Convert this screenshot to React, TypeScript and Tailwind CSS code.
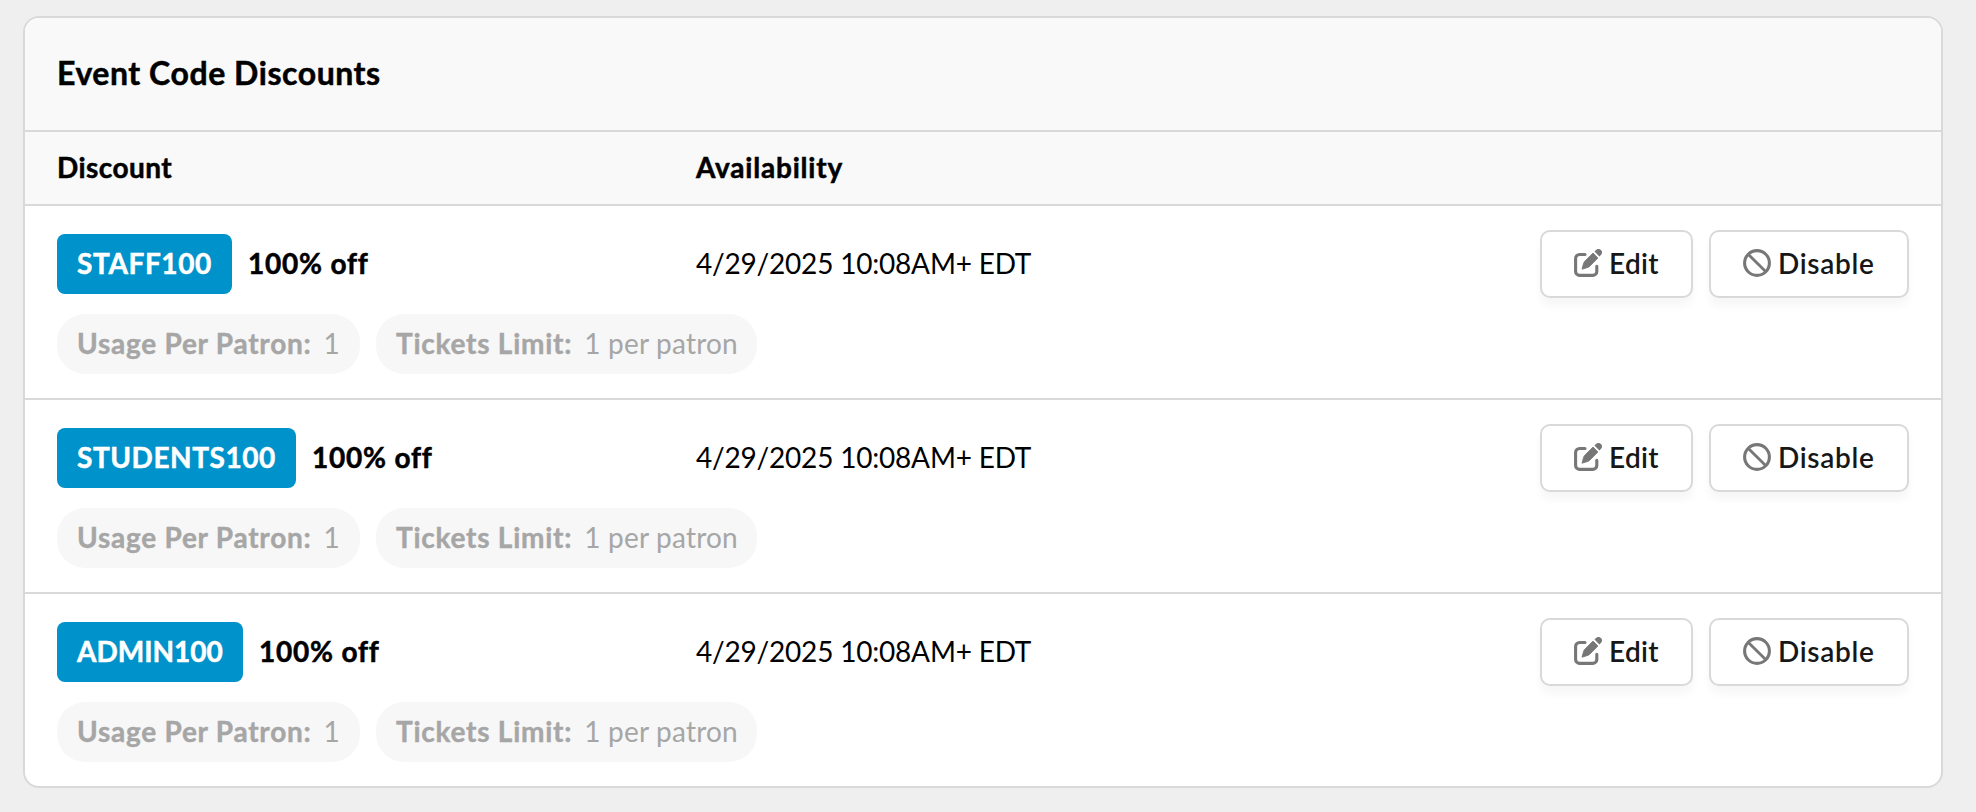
type Discount = {
  code: string;
  amount: string;
  availability: string;
  badgeClass: string;
};

const DISCOUNTS: Discount[] = [
  {
    code: "STAFF100",
    amount: "100% off",
    availability: "4/29/2025 10:08AM+ EDT",
    badgeClass: "w-[175px] tracking-[0.6px]",
  },
  {
    code: "STUDENTS100",
    amount: "100% off",
    availability: "4/29/2025 10:08AM+ EDT",
    badgeClass: "w-[239px] tracking-[0.55px]",
  },
  {
    code: "ADMIN100",
    amount: "100% off",
    availability: "4/29/2025 10:08AM+ EDT",
    badgeClass: "w-[186px]",
  },
];

function EditIcon() {
  return (
    <svg viewBox="0 0 28 28" className="size-7 shrink-0" fill="currentColor">
      <path
        d="M11 5.5H5.6a4 4 0 0 0-4 4v12.9a4 4 0 0 0 4 4h13.2a4 4 0 0 0 4-4V17.2"
        fill="none"
        stroke="currentColor"
        strokeWidth="3.1"
        strokeLinecap="round"
      />
      <path
        d="M8 20.2 9.6 14.4Q9.9 13.2 10.8 12.3L19 4.1 23.9 9 15.7 17.2Q14.8 18.1 13.7 18.4Z"
        stroke="currentColor"
        strokeWidth="0.9"
        strokeLinejoin="round"
      />
      <path d="M20.5 2.6 22 1.1a3.4 3.4 0 0 1 4.9 4.9L25.4 7.5Z" />
    </svg>
  );
}

function BanIcon() {
  return (
    <svg viewBox="0 0 28 28" className="size-7 shrink-0" fill="none" stroke="currentColor">
      <circle cx="14" cy="14" r="12.4" strokeWidth="3.1" />
      <path d="M5.4 5.4 22.6 22.6" strokeWidth="2.8" />
    </svg>
  );
}

function Pill({ label, value, className }: { label: string; value: string; className: string }) {
  return (
    <div
      className={`flex h-[60px] shrink-0 items-center rounded-[28px] bg-[#f7f7f7] pb-0.5 pl-5 text-[#a6a6a6] ${className}`}
    >
      <span className="font-bold tracking-[0.75px] [-webkit-text-stroke:0.4px]">{label}</span>
      <span className="ml-[12px] tracking-[0.2px]">{value}</span>
    </div>
  );
}

function ActionButton({
  icon,
  label,
  className,
}: {
  icon: React.ReactNode;
  label: string;
  className: string;
}) {
  return (
    <button
      className={`flex h-[68px] items-center rounded-[10px] border-2 border-[#d9d9d9] bg-white pb-0.5 pl-8 font-semibold text-[#171717] shadow-[0_8px_8px_rgba(0,0,0,0.035)] ${className}`}
    >
      <span className="mr-[7px] text-[#777]">{icon}</span>
      {label}
    </button>
  );
}

function DiscountRow({ discount }: { discount: Discount }) {
  return (
    <div className="flex h-[194px] border-t-2 border-[#d9d9d9] px-8">
      <div className="w-[639px] shrink-0 pt-7">
        <div className="flex items-center gap-4 font-bold [-webkit-text-stroke:0.5px]">
          <span
            className={`flex h-[60px] items-center rounded-lg bg-[#0092ca] pb-0.5 pl-5 text-white ${discount.badgeClass}`}
          >
            {discount.code}
          </span>
          <span className="pb-0.5 tracking-[0.8px]">{discount.amount}</span>
        </div>
        <div className="mt-5 flex gap-4 whitespace-nowrap">
          <Pill label="Usage Per Patron:" value="1" className="w-[303px]" />
          <Pill label="Tickets Limit:" value="1 per patron" className="w-[381px]" />
        </div>
      </div>
      <div className="mt-7 flex h-[60px] items-center pb-0.5 whitespace-nowrap tracking-[-0.2px]">
        {discount.availability}
      </div>
      <div className="ml-auto flex gap-4 pt-6">
        <ActionButton icon={<EditIcon />} label="Edit" className="w-[153px] tracking-[0.3px]" />
        <ActionButton icon={<BanIcon />} label="Disable" className="w-[200px] tracking-[0.7px]" />
      </div>
    </div>
  );
}

export default function App() {
  return (
    <div className="h-[812px] bg-[#efefef] pt-4 pl-[23px] font-['Lato','Open_Sans',sans-serif] text-[28px] leading-10 text-black">
      <div className="h-[772px] w-[1920px] overflow-hidden rounded-2xl border-2 border-[#d9d9d9] bg-white">
        <div className="flex h-28 items-center bg-[#f9f9f9] px-8 pb-0.5">
          <h2 className="text-[32px] font-bold tracking-[0.55px] [-webkit-text-stroke:0.5px]">
            Event Code Discounts
          </h2>
        </div>
        <div className="flex h-[74px] items-center border-t-2 border-[#d9d9d9] bg-[#f9f9f9] px-8 pb-0.5 font-bold [-webkit-text-stroke:0.5px]">
          <div className="w-[639px] tracking-[0.45px]">Discount</div>
          <div className="tracking-[0.8px]">Availability</div>
        </div>
        {DISCOUNTS.map((d) => (
          <DiscountRow key={d.code} discount={d} />
        ))}
      </div>
    </div>
  );
}
